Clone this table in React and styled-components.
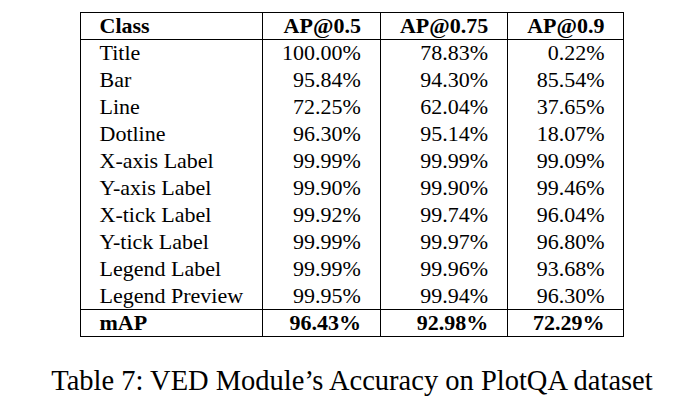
import React from "react";
import styled, { createGlobalStyle } from "styled-components";

const GlobalStyle = createGlobalStyle`
  html, body {
    margin: 0;
    padding: 0;
    background: #fff;
  }
  body {
    font-family: "Liberation Serif", "Times New Roman", serif;
    color: #000;
  }
`;

const Figure = styled.div`
  width: 674px;
  height: 408px;
  box-sizing: border-box;
  padding: 12px 0 0 30px;
  display: flex;
  flex-direction: column;
  align-items: center;
`;

const Table = styled.table`
  border-collapse: collapse;
  border: 1px solid #000;
  font-size: 22px;
  line-height: 26px;
`;

const Cell = styled.td`
  border-left: 1px solid #000;
  border-right: 1px solid #000;
  padding: 0 19px;
  height: 27px;
  box-sizing: border-box;
  text-align: ${(p) => (p.$num ? "right" : "left")};
  font-weight: ${(p) => (p.$bold ? "bold" : "normal")};
  width: ${(p) => p.$w}px;
  white-space: nowrap;
`;

const Row = styled.tr`
  border-top: ${(p) => (p.$rule ? "1px solid #000" : "none")};
`;

const Caption = styled.p`
  margin: 27px 0 0;
  font-size: 28.5px;
  line-height: 33px;
  white-space: nowrap;
`;

const widths = [182, 116, 126, 114];

const rows = [
  ["Title", "100.00%", "78.83%", "0.22%"],
  ["Bar", "95.84%", "94.30%", "85.54%"],
  ["Line", "72.25%", "62.04%", "37.65%"],
  ["Dotline", "96.30%", "95.14%", "18.07%"],
  ["X-axis Label", "99.99%", "99.99%", "99.09%"],
  ["Y-axis Label", "99.90%", "99.90%", "99.46%"],
  ["X-tick Label", "99.92%", "99.74%", "96.04%"],
  ["Y-tick Label", "99.99%", "99.97%", "96.80%"],
  ["Legend Label", "99.99%", "99.96%", "93.68%"],
  ["Legend Preview", "99.95%", "99.94%", "96.30%"],
];

const TableRow = ({ cells, bold, rule }) => (
  <Row $rule={rule}>
    {cells.map((c, i) => (
      <Cell key={i} $num={i > 0} $bold={bold} $w={widths[i]}>
        {c}
      </Cell>
    ))}
  </Row>
);

const App = () => {
  return (
    <Figure>
      <GlobalStyle />
      <Table>
        <thead>
          <TableRow cells={["Class", "AP@0.5", "AP@0.75", "AP@0.9"]} bold />
        </thead>
        <tbody>
          {rows.map((r, i) => (
            <TableRow key={r[0]} cells={r} rule={i === 0} />
          ))}
          <TableRow cells={["mAP", "96.43%", "92.98%", "72.29%"]} bold rule />
        </tbody>
      </Table>
      <Caption>Table 7: VED Module’s Accuracy on PlotQA dataset</Caption>
    </Figure>
  );
};

export default App;
